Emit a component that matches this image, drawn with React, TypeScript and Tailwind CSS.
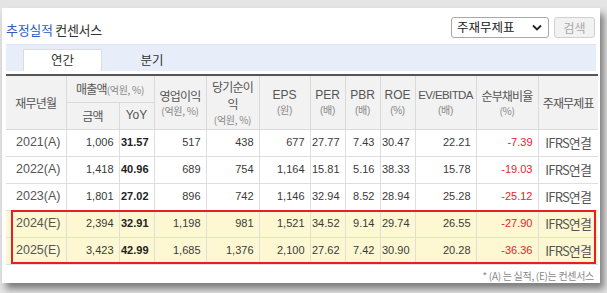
import React from 'react';

const KR = '"Noto Sans CJK KR", "Liberation Sans", sans-serif';
const NUM = '"Liberation Sans", "Noto Sans CJK KR", sans-serif';

interface Row {
  period: string;
  sales: string;
  yoy: string;
  op: string;
  net: string;
  eps: string;
  per: string;
  pbr: string;
  roe: string;
  ev: string;
  debt: string;
  est: boolean;
}

const rows: Row[] = [
  { period: '2021(A)', sales: '1,006', yoy: '31.57', op: '517', net: '438', eps: '677', per: '27.77', pbr: '7.43', roe: '30.47', ev: '22.21', debt: '-7.39', est: false },
  { period: '2022(A)', sales: '1,418', yoy: '40.96', op: '689', net: '754', eps: '1,164', per: '15.81', pbr: '5.16', roe: '38.33', ev: '15.78', debt: '-19.03', est: false },
  { period: '2023(A)', sales: '1,801', yoy: '27.02', op: '896', net: '742', eps: '1,146', per: '32.94', pbr: '8.52', roe: '28.94', ev: '25.28', debt: '-25.12', est: false },
  { period: '2024(E)', sales: '2,394', yoy: '32.91', op: '1,198', net: '981', eps: '1,521', per: '34.52', pbr: '9.14', roe: '29.74', ev: '26.55', debt: '-27.90', est: true },
  { period: '2025(E)', sales: '3,423', yoy: '42.99', op: '1,685', net: '1,376', eps: '2,100', per: '27.62', pbr: '7.42', roe: '30.90', ev: '20.28', debt: '-36.36', est: true },
];

const widths = [60, 53, 35, 52, 53, 51, 35, 35, 35, 61, 62, 60];

function Unit({ children }: { children: React.ReactNode }) {
  return <span className="block mt-[1px] text-[10px] leading-[13px] tracking-[-0.3px] text-[#888]">{children}</span>;
}

export default function App() {
  const th = 'font-normal border-r border-b border-[#dadada] p-0';
  return (
    <div className="w-[607px] h-[293px] bg-[#e4e4e4] pt-[8px] pl-[2px] overflow-hidden">
      <div
        className="relative w-[598px] h-[275px] bg-white px-[4px] shadow-[4px_6px_7px_rgba(0,0,0,0.45)]"
        style={{ fontFamily: KR }}
      >
        {/* title + controls */}
        <div className="flex items-center justify-between pt-[9px] h-[30px]">
          <h2 className="text-[13px] leading-[21px] pt-[4px] tracking-[-0.3px] text-[#333]">
            <span className="text-[#2c5bc6]">추정실적</span> 컨센서스
          </h2>
          <div className="flex items-center gap-[5px] pr-[1px]">
            <div className="w-[98px] h-[21px] border border-[#a8a8a8] rounded-[3px] flex items-center justify-between pl-[5px] pr-[6px] text-[12.5px] text-[#222]">
              <span>주재무제표</span>
              <svg width="10" height="7" viewBox="0 0 10 7">
                <path d="M1 1.5 L5 5.5 L9 1.5" fill="none" stroke="#222" strokeWidth="1.8" />
              </svg>
            </div>
            <button className="w-[41px] h-[21px] border border-[#cfcfcf] rounded-[3px] bg-[#f2f2f2] text-[12px] text-[#a9a9a9]">
              검색
            </button>
          </div>
        </div>

        {/* tabs */}
        <div className="mt-[6px] h-[27px] bg-[#e8eef9] border-t border-[#dde4f0] flex items-end pl-[17px] text-[12.5px] text-[#333]">
          <div className="w-[79px] h-[22px] bg-white border border-b-0 border-[#dcdcdc] flex items-center justify-center">연간</div>
          <div className="w-[100px] h-[22px] flex items-center justify-center">분기</div>
        </div>

        {/* table */}
        <div className="relative mt-[3px]">
          <table className="table-fixed border-collapse w-[592px] border-t-2 border-[#555]">
            <colgroup>
              {widths.map((w, i) => (
                <col key={i} style={{ width: w }} />
              ))}
            </colgroup>
            <thead className="bg-[#f2f2f2] text-[#555] text-[12px] leading-[15px] tracking-[-0.8px]">
              <tr className="h-[27px]">
                <th rowSpan={2} className={th}>재무년월</th>
                <th colSpan={2} className={th}>
                  매출액<span className="text-[10px] text-[#888] tracking-[-0.3px]">(억원, %)</span>
                </th>
                <th rowSpan={2} className={th}>
                  영업이익<Unit>(억원, %)</Unit>
                </th>
                <th rowSpan={2} className={`${th} leading-[17px]`}>
                  <span className="block">당기순이</span>
                  <span className="block">익</span>
                  <Unit>(억원, %)</Unit>
                </th>
                <th rowSpan={2} className={`${th} tracking-normal`} style={{ fontFamily: NUM }}>
                  EPS<Unit>(원)</Unit>
                </th>
                <th rowSpan={2} className={`${th} tracking-normal`} style={{ fontFamily: NUM }}>
                  PER<Unit>(배)</Unit>
                </th>
                <th rowSpan={2} className={`${th} tracking-normal`} style={{ fontFamily: NUM }}>
                  PBR<Unit>(배)</Unit>
                </th>
                <th rowSpan={2} className={`${th} tracking-normal`} style={{ fontFamily: NUM }}>
                  ROE<Unit>(%)</Unit>
                </th>
                <th rowSpan={2} className={`${th} text-[11.5px] tracking-[-0.6px]`} style={{ fontFamily: NUM }}>
                  EV/EBITDA<Unit>(배)</Unit>
                </th>
                <th rowSpan={2} className={th}>
                  순부채비율<Unit>(%)</Unit>
                </th>
                <th rowSpan={2} className="font-normal border-b border-[#dadada] p-0">주재무제표</th>
              </tr>
              <tr className="h-[27px]">
                <th className={th}>금액</th>
                <th className={`${th} tracking-normal`} style={{ fontFamily: NUM }}>YoY</th>
              </tr>
            </thead>
            <tbody className="text-[11px] text-[#3a3a3a]" style={{ fontFamily: NUM }}>
              {rows.map((r) => {
                const cell = 'border-r border-b border-[#dedede] text-right pr-[5px]';
                return (
                  <tr key={r.period} className={`h-[27px] ${r.est ? 'bg-[#fdf7d2]' : 'bg-white'}`}>
                    <td className="border-r border-b border-[#dedede] text-[12.5px] text-[#555] pl-[10px]">{r.period}</td>
                    <td className={cell}>{r.sales}</td>
                    <td className={`${cell} font-bold text-[#222]`}>{r.yoy}</td>
                    <td className={cell}>{r.op}</td>
                    <td className={cell}>{r.net}</td>
                    <td className={cell}>{r.eps}</td>
                    <td className={cell}>{r.per}</td>
                    <td className={cell}>{r.pbr}</td>
                    <td className={cell}>{r.roe}</td>
                    <td className={cell}>{r.ev}</td>
                    <td className={`${cell} text-[#e0262e]`}>{r.debt}</td>
                    <td className="border-b border-[#dedede] text-center text-[13px] text-[#555] tracking-[-0.8px]" style={{ fontFamily: KR }}>
                      IFRS연결
                    </td>
                  </tr>
                );
              })}
            </tbody>
          </table>
          {/* red highlight box over estimate rows */}
          <div className="absolute left-[5px] top-[136px] w-[585px] h-[54px] border-2 border-[#ec1c24] pointer-events-none" />
        </div>

        <p className="mt-[4px] text-right text-[10px] leading-[14px] tracking-[-0.3px] text-[#888] pr-[2px]">* (A) 는 실적, (E)는 컨센서스</p>
      </div>
    </div>
  );
}
